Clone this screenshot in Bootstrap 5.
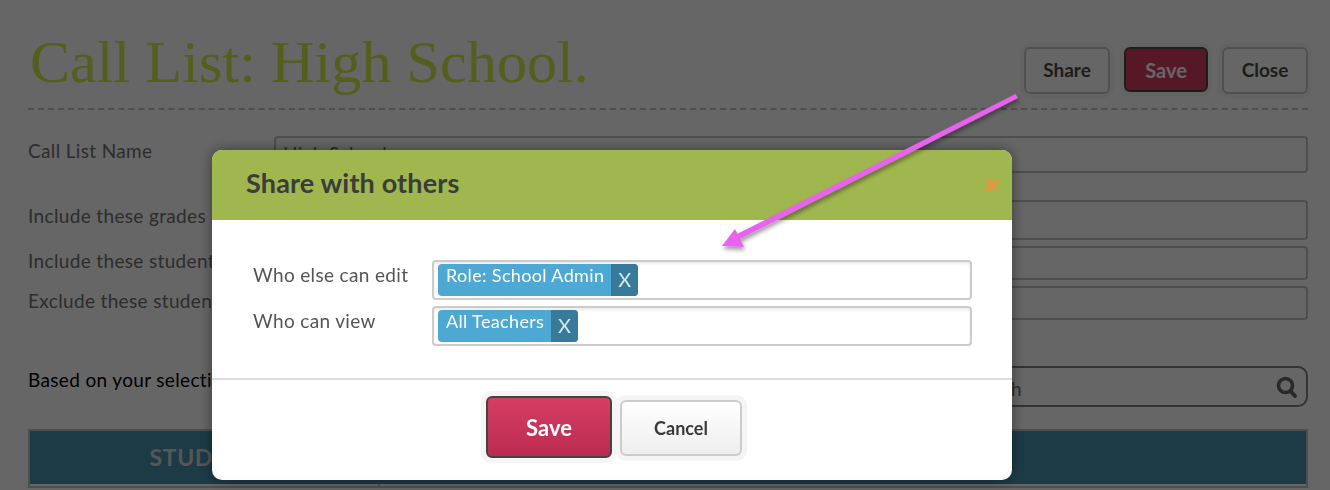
<!DOCTYPE html>
<html>
<head>
  <title>Call List: High School</title>
  <link rel="stylesheet" href="https://cdn.jsdelivr.net/npm/bootstrap@5.3.0/dist/css/bootstrap.min.css">
  <style>
    html, body {
      height: 490px;
      overflow: hidden;
    }

    body {
      background: #fff;
      font-family: "Lato", "Liberation Sans", sans-serif;
      color: #666;
      letter-spacing: .35px;
    }

    .page-wrap {
      padding: 0 22px 0 28px;
    }

    .page-head {
      height: 110px;
      padding-top: 35px;
      border-bottom: 2px dashed #c4c4c4;
    }

    .page-title {
      margin: 0 0 0 2px;
      font-family: "Liberation Serif", serif;
      font-weight: 400;
      font-size: 60px;
      line-height: 54px;
      letter-spacing: .1px;
      color: #d6ea4c;
    }

    .head-actions {
      padding-top: 12px;
      gap: 14px;
    }

    .head-btn {
      height: 47px;
      width: 86px;
      padding: 0;
      font-size: 19px;
      font-weight: 700;
      color: #4a4a4a;
      background: #fff;
      border: 2px solid #c8c8c8;
      border-radius: 6px;
      box-shadow: 0 0 0 4px rgba(0, 0, 0, .03);
    }

    .head-btn-save {
      width: 84px;
      height: 45px;
      font-size: 20px;
      color: #fff;
      background: #d63a63;
      border-color: #4a4a4a;
    }

    .field-row {
      display: flex;
      align-items: center;
      font-size: 19px;
      color: #707070;
    }

    .field-row label {
      width: 246px;
      flex: none;
    }

    .field-box {
      flex: 1;
      border: 2px solid #c4c4c4;
      border-radius: 4px;
      background: #fff;
      padding: 2px 7px 0;
      font-size: 19px;
      color: #707070;
    }

    .row-name { margin-top: 26px; height: 37px; }
    .row-name label { margin-top: -6px; }
    .row-grades { margin-top: 27px; height: 40px; }
    .row-grades label { margin-top: -8px; }
    .row-incl { margin-top: 6px; height: 34px; }
    .row-incl label { margin-top: -4px; }
    .row-excl { margin-top: 6px; height: 34px; }
    .row-excl label { margin-top: -4px; }
    .field-box.grow-full { height: 100%; }

    .search-row {
      margin-top: 46px;
      height: 41px;
      font-size: 19px;
      color: #000;
    }

    .search-note {
      margin-bottom: 12px;
    }

    .search-box {
      width: 358px;
      height: 41px;
      padding: 0 7px 0 12px;
      border: 2px solid #808080;
      border-radius: 10px;
      color: #707070;
    }

    .search-word {
      padding-top: 5px;
    }

    .list-table {
      margin: 22px 0 0;
      width: 100%;
      border: 2px solid #c4c4c4;
      border-collapse: collapse;
    }

    .list-table th {
      height: 54px;
      background: #4894b2;
      color: #d8d8d8;
      font-size: 23px;
      font-weight: 700;
      letter-spacing: .6px;
      text-align: center;
      vertical-align: middle;
      padding: 0;
    }

    .list-table td {
      height: 3px;
      padding: 0;
      border-right: 2px solid #c4c4c4;
    }

    .list-table .col-student {
      width: 350px;
    }

    .modal-backdrop.show {
      opacity: .6;
    }

    .share-dialog {
      width: 800px;
      max-width: 800px;
      margin: 150px 0 0 212px;
    }

    .share-dialog .modal-content {
      height: 330px;
      border: 0;
      border-radius: 10px;
      overflow: hidden;
      box-shadow: 0 0 14px rgba(0, 0, 0, .45);
    }

    .share-dialog .modal-header {
      position: relative;
      height: 70px;
      padding: 0 0 4px 34px;
      border: 0;
      border-radius: 0;
      background: #a0b64f;
    }

    .share-title {
      margin: 0;
      font-size: 27px;
      font-weight: 700;
      letter-spacing: .15px;
      color: #3a3d3a;
    }

    .share-close {
      position: absolute;
      right: 13px;
      top: 28px;
      line-height: 0;
    }

    .share-dialog .modal-body {
      flex: none;
      height: 160px;
      padding: 40px 40px 0 41px;
      border-bottom: 2px solid #ddd;
    }

    .share-row {
      display: flex;
      margin-bottom: 6px;
      font-size: 19px;
      color: #555;
    }

    .share-row label {
      width: 179px;
      flex: none;
      padding-top: 1px;
    }

    .tag-input {
      flex: 1;
      height: 40px;
      padding: 2px 4px;
      border: 2px solid #ccc;
      border-radius: 4px;
      box-shadow: inset 0 2px 3px rgba(0, 0, 0, .08);
    }

    .tag-chip {
      display: flex;
      width: fit-content;
      height: 32px;
      border-radius: 4px;
      overflow: hidden;
      background: #4da8d3;
      color: #fff;
      font-size: 18px;
    }

    .tag-chip span {
      padding: 0 7px 0 8px;
      line-height: 23px;
    }

    .tag-chip b {
      width: 27px;
      font-weight: 400;
      font-size: 20px;
      line-height: 30px;
      text-align: center;
      color: #d6e8f0;
      background: #387a9a;
    }

    .share-dialog .modal-footer {
      flex: none;
      padding: 16px 0 0 274px;
      border: 0;
      justify-content: flex-start;
      align-items: flex-start;
      flex-wrap: nowrap;
      gap: 8px;
    }

    .share-dialog .modal-footer > * {
      margin: 0;
    }

    .btn-save-big {
      width: 126px;
      height: 62px;
      padding: 0;
      font-size: 22px;
      font-weight: 700;
      color: #fff;
      background: linear-gradient(#d53f64, #bb2a50);
      border: 2px solid #444;
      border-radius: 6px;
      box-shadow: 0 0 0 5px #f5f5f5;
    }

    .btn-cancel-big {
      width: 122px;
      height: 56px;
      margin-top: 4px !important;
      padding: 0;
      font-size: 18px;
      font-weight: 700;
      color: #3a3a3a;
      background: linear-gradient(#fff, #eee);
      border: 2px solid #ccc;
      border-radius: 6px;
      box-shadow: 0 0 0 5px #f5f5f5;
    }

    .note-arrow {
      position: fixed;
      left: 0;
      top: 0;
      z-index: 2000;
      pointer-events: none;
    }
  </style>
</head>
<body>
  <div class="page-wrap">
    <div class="page-head d-flex justify-content-between">
      <h1 class="page-title">Call List: High School.</h1>
      <div class="head-actions d-flex align-items-start">
        <button class="btn head-btn">Share</button>
        <button class="btn head-btn head-btn-save">Save</button>
        <button class="btn head-btn">Close</button>
      </div>
    </div>

    <div class="field-row row-name">
      <label>Call List Name</label>
      <div class="field-box grow-full">High School</div>
    </div>
    <div class="field-row row-grades">
      <label>Include these grades</label>
      <div class="field-box grow-full"></div>
    </div>
    <div class="field-row row-incl">
      <label>Include these students</label>
      <div class="field-box grow-full"></div>
    </div>
    <div class="field-row row-excl">
      <label>Exclude these students</label>
      <div class="field-box grow-full"></div>
    </div>

    <div class="search-row d-flex justify-content-between align-items-center">
      <div class="search-note">Based on your selections</div>
      <div class="search-box d-flex justify-content-between align-items-center">
        <span class="search-word">Search</span>
        <svg width="24" height="24" viewBox="0 0 24 24">
          <circle cx="10.5" cy="10.5" r="7" fill="none" stroke="#666" stroke-width="3.6"/>
          <path d="M15.5 16 L20 21" stroke="#666" stroke-width="4" stroke-linecap="round"/>
        </svg>
      </div>
    </div>

    <table class="list-table">
      <thead>
        <tr><th class="col-student">STUDENT</th><th></th></tr>
      </thead>
      <tbody>
        <tr><td></td><td></td></tr>
      </tbody>
    </table>
  </div>

  <div class="modal-backdrop show"></div>

  <div class="modal d-block">
    <div class="modal-dialog share-dialog">
      <div class="modal-content">
        <div class="modal-header">
          <h5 class="share-title">Share with others</h5>
          <span class="share-close">
            <svg width="14" height="14" viewBox="0 0 14 14">
              <path d="M2.5 2.5 L11.5 11.5 M11.5 2.5 L2.5 11.5" stroke="#e8963f" stroke-width="3.6" stroke-linecap="round"/>
            </svg>
          </span>
        </div>
        <div class="modal-body">
          <div class="share-row">
            <label>Who else can edit</label>
            <div class="tag-input">
              <div class="tag-chip"><span>Role: School Admin</span><b>X</b></div>
            </div>
          </div>
          <div class="share-row">
            <label>Who can view</label>
            <div class="tag-input">
              <div class="tag-chip"><span>All Teachers</span><b>X</b></div>
            </div>
          </div>
        </div>
        <div class="modal-footer">
          <button class="btn btn-save-big">Save</button>
          <button class="btn btn-cancel-big">Cancel</button>
        </div>
      </div>
    </div>
  </div>

  <svg class="note-arrow" width="1330" height="490" viewBox="0 0 1330 490">
    <defs>
      <filter id="arrowShadow" x="-10%" y="-10%" width="120%" height="130%">
        <feDropShadow dx="1" dy="3" stdDeviation="2" flood-color="#000" flood-opacity=".4"/>
      </filter>
    </defs>
    <g filter="url(#arrowShadow)" fill="#e862ee">
      <path d="M1015.5 94 L1018 98 L738 240 L735 235 Z"/>
      <path d="M722 246 L735 229 L744 247 Z"/>
    </g>
  </svg>

  <script src="https://cdn.jsdelivr.net/npm/bootstrap@5.3.0/dist/js/bootstrap.bundle.min.js"></script>
</body>
</html>
